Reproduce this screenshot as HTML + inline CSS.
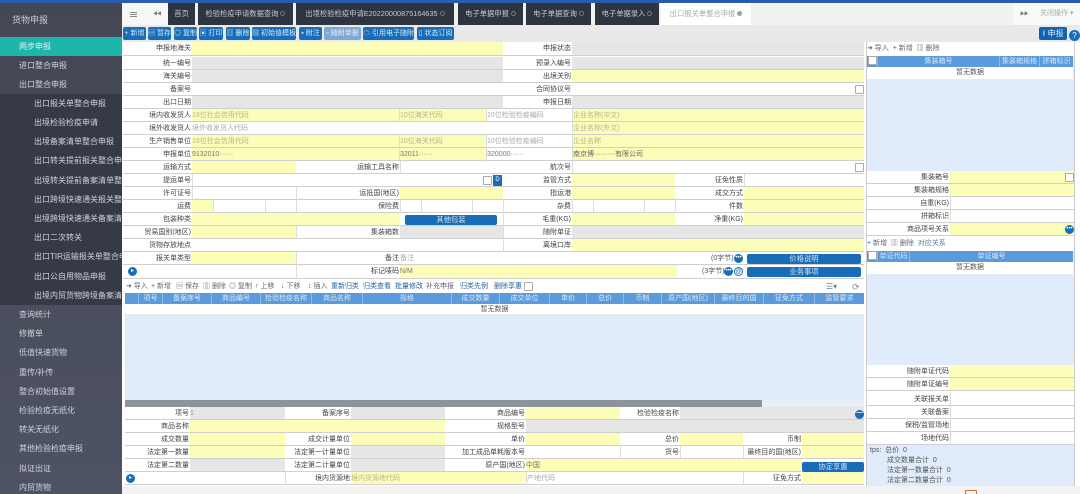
<!DOCTYPE html>
<html lang="zh"><head><meta charset="utf-8"><title>货物申报</title>
<style>
*{box-sizing:border-box}
html,body{margin:0;padding:0;width:1080px;height:494px;overflow:hidden;background:#fff}
body{font-family:"Liberation Sans","Noto Sans CJK SC",sans-serif;font-size:7px;color:#555}
#p{position:absolute;left:0;top:0;width:1080px;height:494px;overflow:hidden;filter:blur(.35px)}
#p div,#p span.a{position:absolute;white-space:nowrap}
.si{left:0;width:122px;height:19px;line-height:19px;color:#cfd2d8;font-size:8px;padding-left:19px;overflow:hidden}
.sb{padding-left:34px;background:#363a46}
.t{top:3px;height:22px;line-height:22px;background:#2f3441;color:#c5c8ce;font-size:7.3px;text-align:center;overflow:hidden}
.t i{display:inline-block;width:5px;height:5px;border:1px solid #777;border-radius:50%;margin-left:2px}
.b{top:27px;height:13px;line-height:13px;background:#186db8;color:#d8e8f6;border-radius:2px;text-align:center;font-size:7px;overflow:hidden}
.l,.y,.g,.w{height:13px;line-height:13px;border-bottom:1px solid #cfcfcf;overflow:hidden}
.l{background:#fff;color:#444;text-align:right;padding-right:1px}
.y{background:#fdfdba;color:#b5b58f}
.g{background:#e6e6e6;color:#999}
.w{background:#fff;color:#aaa}
.v{border-left:1px solid #ddd}
.bb{background:#186db8;color:#cfe3f5;border-radius:2px;text-align:center;height:10px;line-height:10px;font-size:7.3px}
.ci{width:9px;height:9px;border-radius:50%;background:#186db8;color:#fff;text-align:center;line-height:8px;font-size:6px}
.ck{width:9px;height:9px;border:1px solid #aaa;border-radius:1px;background:#fff}
.h{background:#5b9bdc;height:11px;line-height:11px;color:#d9e8f7;text-align:center;font-size:7px;border-right:1px solid #8db9e6;overflow:hidden}
.tb{color:#667;font-size:7px;line-height:12px;height:12px}
.tb b{color:#2a5f9c;font-weight:normal}
</style></head><body><div id="p">

<!-- sidebar -->
<div style="left:0;top:0;width:122px;height:494px;background:linear-gradient(#434753,#4e5364)"></div>
<div style="left:0;top:0;width:1080px;height:3px;background:#2a5cad"></div>
<div style="left:12px;top:12px;color:#c8cbd2;font-size:9px;line-height:16px">货物申报</div>
<div class="si" style="top:37px;background:#1eb5ab;color:#d8f4f2">两步申报</div>
<div class="si" style="top:56px">进口整合申报</div>
<div class="si" style="top:75px">出口整合申报</div>
<div style="left:0;top:94px;width:122px;height:211px;background:#363a46"></div>
<div class="si sb" style="top:94px">出口报关单整合申报</div>
<div class="si sb" style="top:113px">出境检验检疫申请</div>
<div class="si sb" style="top:132px">出境备案清单整合申报</div>
<div class="si sb" style="top:151px">出口转关提前报关整合申报</div>
<div class="si sb" style="top:171px">出境转关提前备案清单整合申报</div>
<div class="si sb" style="top:190px">出口跨境快速通关报关整合申报</div>
<div class="si sb" style="top:209px">出境跨境快速通关备案清单申报</div>
<div class="si sb" style="top:228px">出口二次转关</div>
<div class="si sb" style="top:247px">出口TIR运输报关单整合申报</div>
<div class="si sb" style="top:267px">出口公自用物品申报</div>
<div class="si sb" style="top:286px">出境内贸货物跨境备案清单申报</div>
<div class="si" style="top:305px">查询统计</div>
<div class="si" style="top:324px">修撤单</div>
<div class="si" style="top:343px">低值快速货物</div>
<div class="si" style="top:363px">重传/补传</div>
<div class="si" style="top:382px">整合初始值设置</div>
<div class="si" style="top:401px">检验检疫无纸化</div>
<div class="si" style="top:420px">转关无纸化</div>
<div class="si" style="top:439px">其他检验检疫申报</div>
<div class="si" style="top:459px">拟证出证</div>
<div class="si" style="top:478px">内贸货物</div>

<!-- tab bar -->
<div style="left:122px;top:3px;width:958px;height:22px;background:#f1f1f1"></div>
<div style="left:122px;top:3px;width:46px;height:22px;background:#f7f7f7"></div>
<div style="left:130px;top:12px;width:7px;height:5px;border-top:1px solid #888;border-bottom:1px solid #888"></div>
<div style="left:130px;top:14px;width:7px;height:1px;background:#888"></div>
<div style="left:153px;top:11px;color:#777;font-size:4.5px;line-height:6px;letter-spacing:-.5px">◀◀</div>
<div class="t" style="left:168px;width:27px">首页</div>
<div class="t" style="left:198px;width:95px">检验检疫申请数据查询<i></i></div>
<div class="t" style="left:296px;width:158px">出境检验检疫申请E20220000875164635<i></i></div>
<div class="t" style="left:458px;width:65px">电子单据申报<i></i></div>
<div class="t" style="left:526px;width:65px">电子单据查询<i></i></div>
<div class="t" style="left:595px;width:64px">电子单据录入<i></i></div>
<div class="t" style="left:661px;width:90px;background:#fff;color:#aaa">出口报关单整合申报<i style="border-color:#8a9;background:#9aa"></i></div>
<div style="left:1013px;top:3px;width:67px;height:22px;background:#f9f9f9"></div>
<div style="left:1020px;top:11px;color:#777;font-size:4.5px;line-height:6px;letter-spacing:-.5px">▶▶</div>
<div style="left:1040px;top:9px;color:#aaa;font-size:7px;line-height:10px">关闭操作 ▾</div>

<!-- toolbar -->
<div style="left:122px;top:25px;width:958px;height:17px;background:#e9e9e9"></div>
<div class="b" style="left:123px;width:23px">+ 新增</div>
<div class="b" style="left:148px;width:23px">▤ 暂存</div>
<div class="b" style="left:174px;width:23px">◎ 复制</div>
<div class="b" style="left:199px;width:24px">▣ 打印</div>
<div class="b" style="left:226px;width:24px">▥ 删除</div>
<div class="b" style="left:252px;width:44px">▧ 初始值模板</div>
<div class="b" style="left:299px;width:23px">▪ 附注</div>
<div class="b" style="left:324px;width:37px;background:#7fa8d2;color:#e6eff8">▫ 随附单据</div>
<div class="b" style="left:363px;width:51px">☁ 引用电子随附</div>
<div class="b" style="left:417px;width:37px">▯ 状态订阅</div>
<div class="b" style="left:1039px;width:28px;background:#1263ae;font-size:8px">⭱ 申报</div>
<div class="ci" style="left:1069px;top:30px;width:11px;height:11px;line-height:11px;font-size:8px">?</div>

<!-- main form -->
<div style="left:122px;top:42px;width:744px;height:452px;background:#fff"></div>

<div class="l" style="left:123px;top:42px;width:69px;height:14px">申报地海关</div><div class="y" style="left:192px;top:42px;width:311px;height:14px"></div><div class="l" style="left:503px;top:42px;width:69px;height:14px">申报状态</div><div class="g" style="left:572px;top:42px;width:292px;height:14px"></div>
<div class="l" style="left:123px;top:57px;width:69px">统一编号</div><div class="g" style="left:192px;top:57px;width:311px"></div><div class="l" style="left:503px;top:57px;width:69px">预录入编号</div><div class="g" style="left:572px;top:57px;width:292px"></div>
<div class="l" style="left:123px;top:70px;width:69px">海关编号</div><div class="g" style="left:192px;top:70px;width:311px"></div><div class="l" style="left:503px;top:70px;width:69px">出境关别</div><div class="y" style="left:572px;top:70px;width:292px"></div>
<div class="l" style="left:123px;top:83px;width:69px">备案号</div><div class="w" style="left:192px;top:83px;width:311px"></div><div class="l" style="left:503px;top:83px;width:69px">合同协议号</div><div class="w" style="left:572px;top:83px;width:292px"></div><div class="ck" style="left:855px;top:85px"></div>
<div class="l" style="left:123px;top:96px;width:69px">出口日期</div><div class="g" style="left:192px;top:96px;width:311px"></div><div class="l" style="left:503px;top:96px;width:69px">申报日期</div><div class="g" style="left:572px;top:96px;width:292px"></div>

<div class="l" style="left:123px;top:109px;width:69px">境内收发货人</div><div class="y" style="left:192px;top:109px;width:207px">18位社会信用代码</div><div class="y v" style="left:399px;top:109px;width:87px">10位海关代码</div><div class="w v" style="left:486px;top:109px;width:86px">10位检验检疫编码</div><div class="y v" style="left:572px;top:109px;width:292px">企业名称(中文)</div>
<div class="l" style="left:123px;top:122px;width:69px">境外收发货人</div><div class="w" style="left:192px;top:122px;width:380px">境外收发货人代码</div><div class="y v" style="left:572px;top:122px;width:292px">企业名称(外文)</div>
<div class="l" style="left:123px;top:135px;width:69px">生产销售单位</div><div class="y" style="left:192px;top:135px;width:207px">18位社会信用代码</div><div class="y v" style="left:399px;top:135px;width:87px">10位海关代码</div><div class="w v" style="left:486px;top:135px;width:86px">10位检验检疫编码</div><div class="y v" style="left:572px;top:135px;width:292px">企业名称</div>
<div class="l" style="left:123px;top:148px;width:69px">申报单位</div><div class="y" style="left:192px;top:148px;width:207px;color:#777">9132010······</div><div class="y v" style="left:399px;top:148px;width:87px;color:#777">32011······</div><div class="w v" style="left:486px;top:148px;width:86px;color:#777">320000······</div><div class="y v" style="left:572px;top:148px;width:292px;color:#666">南京博·········有限公司</div>

<div class="l" style="left:123px;top:161px;width:69px">运输方式</div><div class="y" style="left:192px;top:161px;width:104px"></div><div class="l" style="left:296px;top:161px;width:104px">运输工具名称</div><div class="w v" style="left:400px;top:161px;width:103px"></div><div class="l" style="left:503px;top:161px;width:69px">航次号</div><div class="w v" style="left:572px;top:161px;width:292px"></div><div class="ck" style="left:855px;top:163px"></div>

<div class="l" style="left:123px;top:174px;width:69px">提运单号</div><div class="w v" style="left:192px;top:174px;width:311px"></div><div class="ck" style="left:483px;top:176px"></div><div style="left:493px;top:175px;width:9px;height:11px;background:#186db8;color:#fff;font-size:6px;line-height:11px;text-align:center">D</div><div class="l" style="left:503px;top:174px;width:69px">监管方式</div><div class="y" style="left:572px;top:174px;width:103px"></div><div class="l" style="left:675px;top:174px;width:69px">征免性质</div><div class="w v" style="left:744px;top:174px;width:120px"></div>

<div class="l" style="left:123px;top:187px;width:69px">许可证号</div><div class="w v" style="left:192px;top:187px;width:104px"></div><div class="l v" style="left:296px;top:187px;width:104px">运抵国(地区)</div><div class="y" style="left:400px;top:187px;width:103px"></div><div class="l" style="left:503px;top:187px;width:69px">指运港</div><div class="y" style="left:572px;top:187px;width:103px"></div><div class="l" style="left:675px;top:187px;width:69px">成交方式</div><div class="y" style="left:744px;top:187px;width:120px"></div>

<div class="l" style="left:123px;top:200px;width:69px">运费</div><div class="y" style="left:192px;top:200px;width:21px"></div><div class="w v" style="left:213px;top:200px;width:52px"></div><div class="w v" style="left:265px;top:200px;width:31px"></div><div class="l v" style="left:296px;top:200px;width:104px">保险费</div><div class="w v" style="left:400px;top:200px;width:21px"></div><div class="w v" style="left:421px;top:200px;width:51px"></div><div class="w v" style="left:472px;top:200px;width:31px"></div><div class="l v" style="left:503px;top:200px;width:69px">杂费</div><div class="w v" style="left:572px;top:200px;width:21px"></div><div class="w v" style="left:593px;top:200px;width:51px"></div><div class="w v" style="left:644px;top:200px;width:31px"></div><div class="l v" style="left:675px;top:200px;width:69px">件数</div><div class="y" style="left:744px;top:200px;width:120px"></div>

<div class="l" style="left:123px;top:213px;width:69px">包装种类</div><div class="y" style="left:192px;top:213px;width:208px"></div><div class="w" style="left:400px;top:213px;width:103px"></div><div class="bb" style="left:405px;top:215px;width:92px">其他包装</div><div class="l v" style="left:503px;top:213px;width:69px">毛重(KG)</div><div class="y" style="left:572px;top:213px;width:103px"></div><div class="l" style="left:675px;top:213px;width:69px">净重(KG)</div><div class="y" style="left:744px;top:213px;width:120px"></div>

<div class="l" style="left:123px;top:226px;width:69px">贸易国别(地区)</div><div class="y" style="left:192px;top:226px;width:104px"></div><div class="l v" style="left:296px;top:226px;width:104px">集装箱数</div><div class="g" style="left:400px;top:226px;width:103px"></div><div class="l v" style="left:503px;top:226px;width:69px">随附单证</div><div class="g" style="left:572px;top:226px;width:292px"></div>

<div class="l" style="left:123px;top:239px;width:69px">货物存放地点</div><div class="w" style="left:192px;top:239px;width:311px"></div><div class="l v" style="left:503px;top:239px;width:69px">离境口岸</div><div class="y" style="left:572px;top:239px;width:292px"></div>

<div class="l" style="left:123px;top:252px;width:69px">报关单类型</div><div class="y" style="left:192px;top:252px;width:104px"></div><div class="l v" style="left:296px;top:252px;width:104px">备注</div><div class="w" style="left:400px;top:252px;width:464px;padding-left:0">备注</div>
<div style="left:711px;top:253px;color:#555;line-height:12px">(0字节)</div><div class="ci" style="left:734px;top:254px">•••</div><div class="bb" style="left:747px;top:254px;width:114px">价格说明</div>
<div class="w" style="left:123px;top:265px;width:173px;height:14px"></div><div class="ci" style="left:128px;top:267px">▸</div>
<div class="l v" style="left:296px;top:265px;width:104px;height:14px">标记唛码</div><div class="y" style="left:400px;top:265px;width:277px;height:14px;color:#777">N/M</div><div class="w" style="left:677px;top:265px;width:187px;height:14px"></div><div style="left:702px;top:266px;color:#555;line-height:12px">(3字节)</div><div class="ci" style="left:724px;top:267px">•••</div><div class="ci" style="left:734px;top:267px;background:#fff;border:1px solid #186db8;color:#186db8">@</div><div class="bb" style="left:747px;top:267px;width:114px">业务事项</div>

<!-- goods toolbar -->
<div class="tb" style="left:126px;top:281px">➜ 导入</div>
<div class="tb" style="left:151px;top:281px"><b>+</b> 新增</div>
<div class="tb" style="left:176px;top:281px">▤ 保存</div>
<div class="tb" style="left:203px;top:281px">▥ 删除</div>
<div class="tb" style="left:229px;top:281px">◎ 复制</div>
<div class="tb" style="left:255px;top:281px"><b>↑</b> 上移</div>
<div class="tb" style="left:281px;top:281px"><b>↓</b> 下移</div>
<div class="tb" style="left:308px;top:281px">↕ 插入</div>
<div class="tb" style="left:331px;top:281px"><b>重新归类</b></div>
<div class="tb" style="left:363px;top:281px"><b>归类查看</b></div>
<div class="tb" style="left:395px;top:281px"><b>批量修改</b></div>
<div class="tb" style="left:426px;top:281px">补充申报</div>
<div class="tb" style="left:460px;top:281px"><b>归类先例</b></div>
<div class="tb" style="left:494px;top:281px"><b>删除享惠</b></div>
<div class="ck" style="left:524px;top:282px"></div>
<div style="left:826px;top:281px;color:#5b87b5;font-size:8px;line-height:12px">☰▾</div><div style="left:852px;top:281px;color:#889;font-size:9px;line-height:12px">⟳</div>

<div style="left:125px;top:293px;width:739px;height:107px;background:#e0ecfb"></div>
<div class="h" style="left:125px;top:293px;width:14px"></div>
<div class="h" style="left:139px;top:293px;width:24px">项号</div>
<div class="h" style="left:163px;top:293px;width:49px">备案序号</div>
<div class="h" style="left:212px;top:293px;width:49px">商品编号</div>
<div class="h" style="left:261px;top:293px;width:51px">检验检疫名称</div>
<div class="h" style="left:312px;top:293px;width:51px">商品名称</div>
<div class="h" style="left:363px;top:293px;width:89px">规格</div>
<div class="h" style="left:452px;top:293px;width:48px">成交数量</div>
<div class="h" style="left:500px;top:293px;width:50px">成交单位</div>
<div class="h" style="left:550px;top:293px;width:37px">单价</div>
<div class="h" style="left:587px;top:293px;width:37px">总价</div>
<div class="h" style="left:624px;top:293px;width:38px">币制</div>
<div class="h" style="left:662px;top:293px;width:53px">原产国(地区)</div>
<div class="h" style="left:715px;top:293px;width:49px">最终目的国</div>
<div class="h" style="left:764px;top:293px;width:51px">征免方式</div>
<div class="h" style="left:815px;top:293px;width:49px;border-right:0">监管要求</div>
<div style="left:125px;top:304px;width:739px;height:11px;background:#fff;line-height:11px;text-align:center;color:#555;border-bottom:1px solid #e8e8e8">暂无数据</div>

<div style="left:125px;top:400px;width:739px;height:7px;background:#e8eef6"></div>
<div style="left:125px;top:400px;width:637px;height:7px;background:#8e939b"></div>

<!-- goods form -->
<div class="l" style="left:125px;top:407px;width:65px">项号</div><div class="g" style="left:190px;top:407px;width:95px">1</div><div class="l" style="left:285px;top:407px;width:66px">备案序号</div><div class="g" style="left:351px;top:407px;width:94px"></div><div class="l" style="left:445px;top:407px;width:81px">商品编号</div><div class="y" style="left:526px;top:407px;width:94px"></div><div class="l" style="left:620px;top:407px;width:60px">检验检疫名称</div><div class="g" style="left:680px;top:407px;width:184px"></div><div class="ci" style="left:855px;top:410px">━</div>
<div class="l" style="left:125px;top:420px;width:65px">商品名称</div><div class="y" style="left:190px;top:420px;width:255px"></div><div class="l" style="left:445px;top:420px;width:81px">规格型号</div><div class="g" style="left:526px;top:420px;width:338px"></div>
<div class="l" style="left:125px;top:433px;width:65px">成交数量</div><div class="y" style="left:190px;top:433px;width:95px"></div><div class="l" style="left:285px;top:433px;width:66px">成交计量单位</div><div class="y" style="left:351px;top:433px;width:94px"></div><div class="l" style="left:445px;top:433px;width:81px">单价</div><div class="y" style="left:526px;top:433px;width:94px"></div><div class="l" style="left:620px;top:433px;width:60px">总价</div><div class="y" style="left:680px;top:433px;width:63px"></div><div class="l" style="left:743px;top:433px;width:59px">币制</div><div class="y" style="left:802px;top:433px;width:62px"></div>
<div class="l" style="left:125px;top:446px;width:65px">法定第一数量</div><div class="y" style="left:190px;top:446px;width:95px"></div><div class="l" style="left:285px;top:446px;width:66px">法定第一计量单位</div><div class="g" style="left:351px;top:446px;width:94px"></div><div class="l" style="left:445px;top:446px;width:81px">加工成品单耗版本号</div><div class="w" style="left:526px;top:446px;width:94px"></div><div class="l v" style="left:620px;top:446px;width:60px">货号</div><div class="w v" style="left:680px;top:446px;width:63px"></div><div class="l v" style="left:743px;top:446px;width:59px">最终目的国(地区)</div><div class="y" style="left:802px;top:446px;width:62px"></div>
<div class="l" style="left:125px;top:459px;width:65px">法定第二数量</div><div class="g" style="left:190px;top:459px;width:95px"></div><div class="l" style="left:285px;top:459px;width:66px">法定第二计量单位</div><div class="g" style="left:351px;top:459px;width:94px"></div><div class="l" style="left:445px;top:459px;width:81px">原产国(地区)</div><div class="y" style="left:526px;top:459px;width:276px;color:#777">中国</div><div class="bb" style="left:802px;top:462px;width:62px">协定享惠</div>
<div class="w" style="left:125px;top:472px;width:160px"></div><div class="ci" style="left:126px;top:474px">▸</div><div class="l v" style="left:285px;top:472px;width:66px">境内货源地</div><div class="y" style="left:351px;top:472px;width:175px">境内货源地代码</div><div class="w v" style="left:526px;top:472px;width:217px">产地代码</div><div class="l v" style="left:743px;top:472px;width:59px">征免方式</div><div class="y" style="left:802px;top:472px;width:62px"></div>

<!-- right panel -->
<div style="left:866px;top:42px;width:209px;height:445px;background:#e0ecfb;border-left:1px solid #ccc;border-right:1px solid #ccc"></div>
<div class="tb" style="left:867px;top:42px;width:207px;height:14px;background:#fff;line-height:14px">➜ 导入 &nbsp;<b>+</b> 新增 &nbsp;▥ 删除</div>
<div class="h" style="left:867px;top:56px;width:11px"></div><div class="ck" style="left:868px;top:56px"></div>
<div class="h" style="left:878px;top:56px;width:122px">集装箱号</div>
<div class="h" style="left:1000px;top:56px;width:40px">集装箱规格</div>
<div class="h" style="left:1040px;top:56px;width:33px;border-right:0">拼箱标识</div>
<div style="left:867px;top:67px;width:206px;height:12px;background:#fff;line-height:12px;text-align:center;color:#555">暂无数据</div>

<div class="l" style="left:867px;top:171px;width:83px">集装箱号</div><div class="y" style="left:950px;top:171px;width:124px"></div><div class="ck" style="left:1065px;top:173px"></div>
<div class="l" style="left:867px;top:184px;width:83px">集装箱规格</div><div class="y" style="left:950px;top:184px;width:124px"></div>
<div class="l" style="left:867px;top:197px;width:83px">自重(KG)</div><div class="w v" style="left:950px;top:197px;width:124px"></div>
<div class="l" style="left:867px;top:210px;width:83px">拼箱标识</div><div class="w v" style="left:950px;top:210px;width:124px"></div>
<div class="l" style="left:867px;top:223px;width:83px">商品项号关系</div><div class="y" style="left:950px;top:223px;width:124px"></div><div class="ci" style="left:1065px;top:225px">•••</div>

<div class="tb" style="left:867px;top:236px;width:207px;height:15px;background:#fff;line-height:15px"><b>+</b> 新增 &nbsp;▥ 删除 &nbsp;<span style="color:#5d7f9f">对应关系</span></div>
<div class="h" style="left:867px;top:251px;width:11px"></div><div class="ck" style="left:868px;top:251px"></div>
<div class="h" style="left:878px;top:251px;width:32px">单证代码</div>
<div class="h" style="left:910px;top:251px;width:163px;border-right:0">单证编号</div>
<div style="left:867px;top:262px;width:206px;height:12px;background:#fff;line-height:12px;text-align:center;color:#555">暂无数据</div>

<div class="l" style="left:867px;top:365px;width:83px">随附单证代码</div><div class="y" style="left:950px;top:365px;width:124px"></div>
<div class="l" style="left:867px;top:378px;width:83px">随附单证编号</div><div class="y" style="left:950px;top:378px;width:124px"></div>
<div class="w" style="left:867px;top:391px;width:207px;height:2px;border:0"></div>
<div class="l" style="left:867px;top:393px;width:83px">关联报关单</div><div class="w v" style="left:950px;top:393px;width:124px"></div>
<div class="l" style="left:867px;top:406px;width:83px">关联备案</div><div class="w v" style="left:950px;top:406px;width:124px"></div>
<div class="l" style="left:867px;top:419px;width:83px">保税/监管场地</div><div class="w v" style="left:950px;top:419px;width:124px"></div>
<div class="l" style="left:867px;top:432px;width:83px">场地代码</div><div class="w v" style="left:950px;top:432px;width:124px"></div>
<div style="left:870px;top:446px;color:#555;line-height:10px">tps:&nbsp; 总价 &nbsp;0</div>
<div style="left:887px;top:456px;color:#555;line-height:10px">成交数量合计 &nbsp;0</div>
<div style="left:887px;top:466px;color:#555;line-height:10px">法定第一数量合计 &nbsp;0</div>
<div style="left:887px;top:476px;color:#555;line-height:10px">法定第二数量合计 &nbsp;0</div>

<!-- bottom strip -->
<div style="left:122px;top:486px;width:958px;height:8px;background:#f3f3f3"></div>
<div style="left:965px;top:490px;width:12px;height:5px;border:1px solid #d9694a;border-radius:1px"></div>
</div></body></html>
